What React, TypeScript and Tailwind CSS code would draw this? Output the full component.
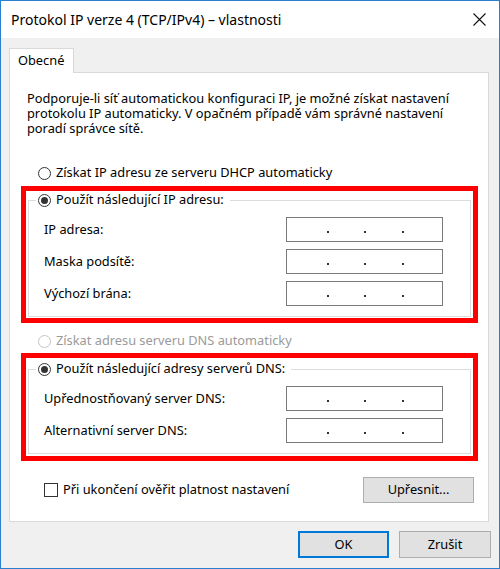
import React from "react";

const font = { fontFamily: '"Noto Sans", "Liberation Sans", sans-serif' };

function Radio({ checked, disabled }: { checked?: boolean; disabled?: boolean }) {
  return (
    <div
      className={`w-[13px] h-[13px] rounded-full border bg-white flex items-center justify-center shrink-0 ${
        disabled ? "border-[#c4c4c4]" : "border-[#333333]"
      }`}
    >
      {checked && <div className="w-[7px] h-[7px] rounded-full bg-[#333333]" />}
    </div>
  );
}

function IpField() {
  return (
    <div className="w-[157px] h-[25px] border border-[#7a7a7a] bg-white flex items-start pt-[13px] pl-[40px]">
      <div className="w-[2px] h-[2px] bg-[#333]" />
      <div className="w-[35px]" />
      <div className="w-[2px] h-[2px] bg-[#333]" />
      <div className="w-[36px]" />
      <div className="w-[2px] h-[2px] bg-[#333]" />
    </div>
  );
}

function Row({ label }: { label: string }) {
  return (
    <div className="flex items-center justify-between pl-[15px] pr-[27px]">
      <span>{label}</span>
      <IpField />
    </div>
  );
}

export default function App() {
  return (
    <div
      className="w-[500px] h-[569px] border border-[#2b7fd0] bg-[#f0f0f0] flex flex-col text-[12.8px] text-black"
      style={font}
    >
      {/* title bar */}
      <div className="h-[37px] bg-white flex items-center justify-between pl-[10px] pr-[13px] shrink-0">
        <span className="text-[14px] text-black">Protokol IP verze 4 (TCP/IPv4) – vlastnosti</span>
        <svg width="13" height="13" viewBox="0 0 13 13" className="mt-[-1px]">
          <path d="M0.5 0.5 L12.5 12.5 M12.5 0.5 L0.5 12.5" stroke="#111" strokeWidth="1.1" />
        </svg>
      </div>

      {/* body */}
      <div className="flex-1 flex flex-col pt-[10px] pl-[8px] pr-[10px]">
        <div className="flex">
          <div className="relative z-10 -mb-px h-[25px] w-[65px] bg-white border border-b-0 border-[#d9d9d9] flex items-center pl-[8px] pb-[1px]">
            Obecné
          </div>
        </div>
        <div className="h-[450px] bg-white border border-[#d9d9d9] flex flex-col">
          <p className="mt-[18px] pl-[17px] leading-[15px]">
            Podporuje-li síť automatickou konfiguraci IP, je možné získat nastavení
            <br />
            protokolu IP automaticky. V opačném případě vám správné nastavení
            <br />
            poradí správce sítě.
          </p>

          <div className="mt-[28px] h-[18px] pl-[28px] flex items-center gap-[5px]">
            <Radio />
            <span>Získat IP adresu ze serveru DHCP automaticky</span>
          </div>

          <div className="mt-[4px] ml-[11px] mr-[10px] h-[137px] border-[5px] border-[#ff0000] flex flex-col">
            <fieldset className="mx-[2px] h-[126px] border border-[#dcdcdc] flex flex-col">
              <legend className="ml-[7px] px-[2px] h-[18px] flex items-center gap-[5px] pr-[6px]">
                <Radio checked />
                <span>Použít následující IP adresu:</span>
              </legend>
              <div className="mt-[8px] flex flex-col gap-[7px]">
                <Row label="IP adresa:" />
                <Row label="Maska podsítě:" />
                <Row label="Výchozí brána:" />
              </div>
            </fieldset>
          </div>

          <div className="mt-[9px] h-[18px] pl-[28px] flex items-center gap-[5px] text-[#9a9a9a]">
            <Radio disabled />
            <span>Získat adresu serveru DNS automaticky</span>
          </div>

          <div className="mt-[3px] ml-[11px] mr-[10px] h-[108px] border-[5px] border-[#ff0000] flex flex-col">
            <fieldset className="mx-[2px] mt-[2px] h-[94px] border border-[#dcdcdc] flex flex-col">
              <legend className="ml-[7px] px-[2px] h-[18px] flex items-center gap-[5px] pr-[6px]">
                <Radio checked />
                <span>Použít následující adresy serverů DNS:</span>
              </legend>
              <div className="mt-[8px] flex flex-col gap-[7px]">
                <Row label="Upřednostňovaný server DNS:" />
                <Row label="Alternativní server DNS:" />
              </div>
            </fieldset>
          </div>

          <div className="mt-[16px] flex items-center justify-between pl-[34px] pr-[14px]">
            <div className="flex items-center gap-[5px]">
              <div className="w-[14px] h-[14px] border border-[#333333] bg-white" />
              <span>Při ukončení ověřit platnost nastavení</span>
            </div>
            <button className="w-[111px] h-[26px] bg-[#e1e1e1] border border-[#adadad] text-[12.8px]">
              Upřesnit...
            </button>
          </div>
        </div>

        <div className="mt-[9px] flex justify-end gap-[10px] -mr-[2px]">
          <button className="w-[91px] h-[27px] bg-[#e1e1e1] border-2 border-[#0078d7] text-[12.8px]">
            OK
          </button>
          <button className="w-[92px] h-[27px] bg-[#e1e1e1] border border-[#adadad] text-[12.8px]">
            Zrušit
          </button>
        </div>
      </div>
    </div>
  );
}
